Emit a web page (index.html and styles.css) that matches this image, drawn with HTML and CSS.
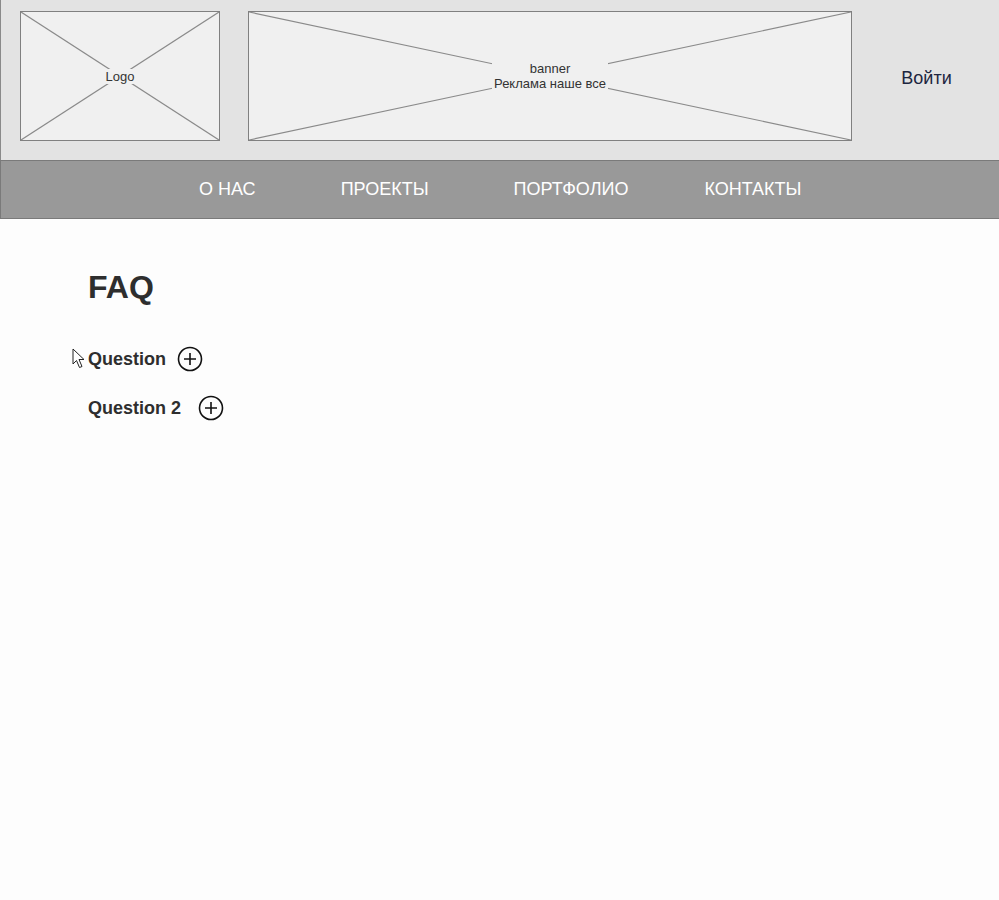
FILE: index.html
```html
<!DOCTYPE html>
<html lang="ru">
<head>
<meta charset="utf-8">
<title>FAQ</title>
<link rel="stylesheet" href="styles.css">
</head>
<body>
<header class="header">
  <div class="ph ph-logo">
    <svg class="ph-x" viewBox="0 0 198 128" preserveAspectRatio="none"><line x1="0" y1="0" x2="198" y2="128"/><line x1="198" y1="0" x2="0" y2="128"/></svg>
    <span class="ph-label">Logo</span>
  </div>
  <div class="ph ph-banner">
    <svg class="ph-x" viewBox="0 0 602 128" preserveAspectRatio="none"><line x1="0" y1="0" x2="602" y2="128"/><line x1="602" y1="0" x2="0" y2="128"/></svg>
    <span class="ph-label">banner<br>Реклама наше все</span>
  </div>
  <div class="login">Войти</div>
</header>
<nav class="nav">
  <a class="nav-item">О НАС</a>
  <a class="nav-item">ПРОЕКТЫ</a>
  <a class="nav-item">ПОРТФОЛИО</a>
  <a class="nav-item nav-item-last">КОНТАКТЫ</a>
</nav>
<main class="main">
  <h1 class="title">FAQ</h1>
  <ul class="faq">
    <li class="faq-row">
      <svg class="cursor" width="14" height="21" viewBox="0 0 14 21"><path d="M1 1 L1 16 L4.5 12.5 L7.5 19.5 L10 18.5 L7 11.5 L12 11.5 Z" fill="#fff" stroke="#222" stroke-width="1" stroke-linejoin="round"/></svg>
      <span class="q">Question</span>
      <svg class="plus" width="26" height="26" viewBox="0 0 26 26"><circle cx="13" cy="13" r="11.5" fill="none" stroke="#111" stroke-width="1.6"/><path d="M7 13 H19 M13 7 V19" stroke="#111" stroke-width="1.6"/></svg>
    </li>
    <li class="faq-row faq-row-wide">
      <span class="q">Question 2</span>
      <svg class="plus" width="26" height="26" viewBox="0 0 26 26"><circle cx="13" cy="13" r="11.5" fill="none" stroke="#111" stroke-width="1.6"/><path d="M7 13 H19 M13 7 V19" stroke="#111" stroke-width="1.6"/></svg>
    </li>
  </ul>
</main>
</body>
</html>
```

FILE: styles.css
```css
* { box-sizing: border-box; }
html, body { margin: 0; padding: 0; }
body {
  background: #fdfdfd;
  font-family: "Liberation Sans", Arial, sans-serif;
  color: #333;
  width: 999px;
  min-height: 900px;
}
.header {
  display: flex;
  align-items: flex-start;
  height: 160px;
  background: #e3e3e3;
  border-left: 1px solid #8a8a8a;
  padding: 11px 0 0 19px;
}
.ph {
  position: relative;
  height: 130px;
  background: #f0f0f0;
  border: 1px solid #808080;
  display: flex;
  align-items: center;
  justify-content: center;
}
.ph-logo { width: 200px; }
.ph-banner { width: 604px; margin-left: 28px; }
.ph-x {
  position: absolute;
  inset: 0;
  width: 100%;
  height: 100%;
}
.ph-x line { stroke: #8a8a8a; stroke-width: 1.2; }
.ph-label {
  position: relative;
  background: #f0f0f0;
  padding: 0 2px;
  font-size: 13px;
  line-height: 15px;
  text-align: center;
  color: #333;
}
.login {
  flex: 1;
  height: 132px;
  display: flex;
  align-items: center;
  justify-content: center;
  font-size: 18px;
  color: #1d2640;
  padding-left: 2px;
  padding-top: 2px;
}
.nav {
  display: flex;
  align-items: center;
  height: 59px;
  background: #999;
  border-top: 1px solid #7a7a7a;
  border-bottom: 1px solid #7a7a7a;
  border-left: 1px solid #7a7a7a;
  padding-left: 198px;
  padding-bottom: 1px;
  gap: 85px;
}
.nav-item {
  color: #fff;
  font-size: 18px;
  text-decoration: none;
}
.nav-item-last { margin-left: -9px; }
.main { padding: 49px 0 0 88px; }
.title {
  margin: 0;
  font-size: 32px;
  font-weight: bold;
  line-height: 38px;
  color: #2e2e2e;
}
.faq {
  list-style: none;
  margin: 40px 0 0;
  padding: 0;
  display: flex;
  flex-direction: column;
  gap: 23px;
}
.faq-row {
  position: relative;
  display: flex;
  align-items: center;
  gap: 11px;
  height: 26px;
}
.faq-row-wide { gap: 17px; }
.q {
  font-size: 18px;
  font-weight: bold;
  color: #2e2e2e;
}
.plus { display: block; }
.cursor {
  position: absolute;
  left: -16px;
  top: 2px;
}
```
